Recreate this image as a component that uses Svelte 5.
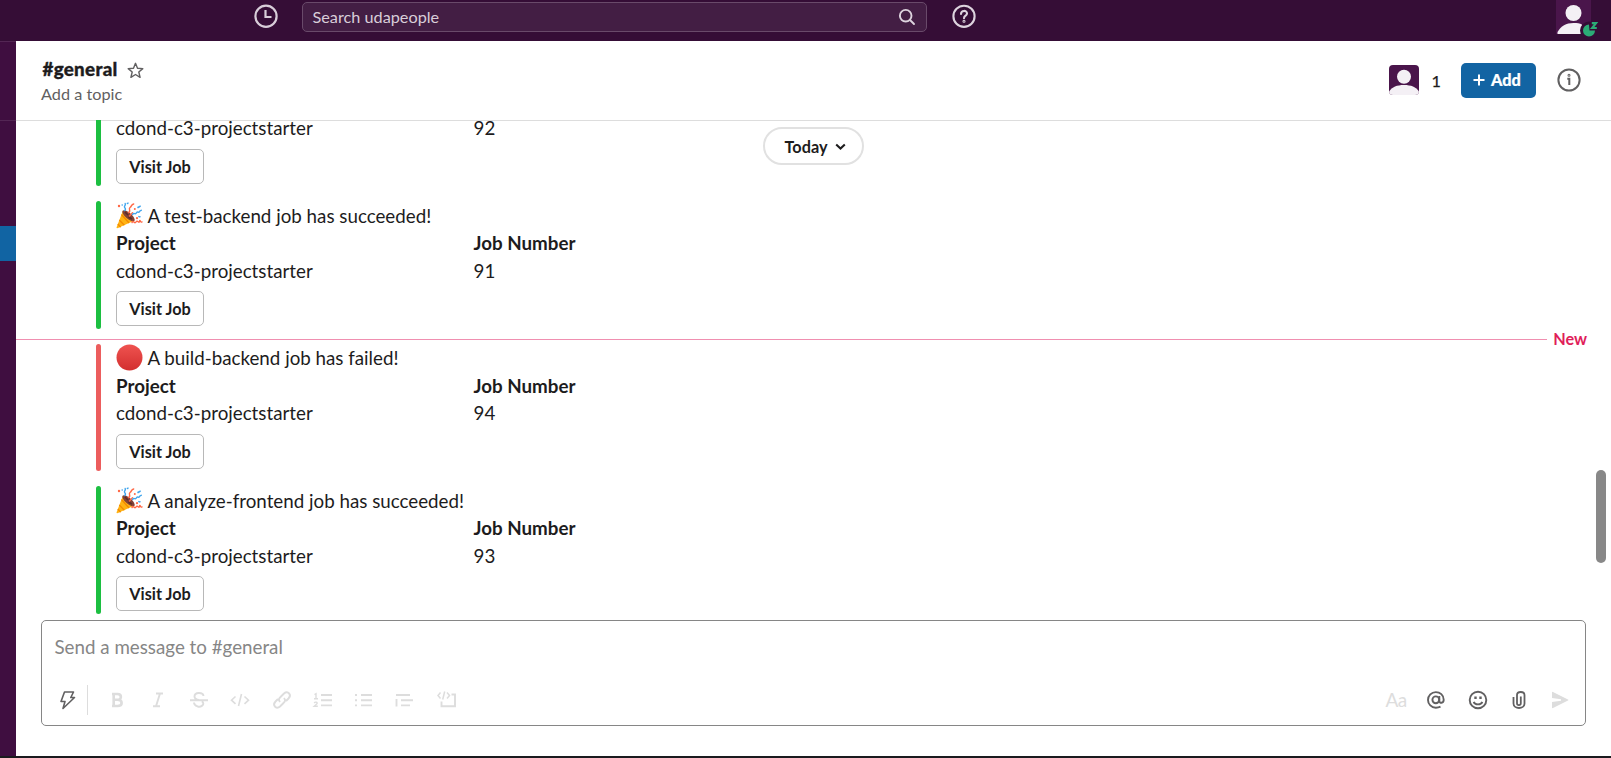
<script>
  const jobs = [
    { id: 1, title: 'A scan-frontend job has succeeded!', number: 92, ok: true, cut: true },
    { id: 2, title: 'A test-backend job has succeeded!', number: 91, ok: true },
    { id: 3, title: 'A build-backend job has failed!', number: 94, ok: false, fresh: true },
    { id: 4, title: 'A analyze-frontend job has succeeded!', number: 93, ok: true }
  ];
</script>

{#snippet person()}
  <svg class="person" viewBox="0 0 30 30">
    <rect width="30" height="30" fill="#4a154b" />
    <circle cx="15" cy="11.8" r="7" fill="#f4f0f5" />
    <path d="M0 30v-3.500C3 22 8 20 15 20s12 2 15 6.500V30z" fill="#f4f0f5" />
  </svg>
{/snippet}

{#snippet party()}
  <svg class="emoji" viewBox="0 0 27 27">
    <path d="M7 8.500 0.500 25.500Q0.500 26.500 2 26L18.500 18.500Z" fill="#ffb414" />
    <path d="M5.500 12.500 13 21M3.300 18l5 5.200M1.800 22l2.800 3.200" stroke="#f48b00" stroke-width="1.300" fill="none" />
    <ellipse cx="12.500" cy="13.800" rx="3" ry="7.800" transform="rotate(-49 12.500 13.800)" fill="#824237" />
    <path d="m9 10 3 3M12.500 15l3.500 2" stroke="#5b2d28" stroke-width="1.500" />
    <g fill="none" stroke-linecap="round" stroke-width="1.400">
      <path d="M12.500 10.500c3-1-.5-3.500 1.500-5 1.800-1 1-3 3.700-3.500M16 20.500c1-3 2.500 2 4-.5s3 2 3.500-.7 1 1.700 2.500.7M13.500 14l3-3.200" stroke="#ff6745" />
      <path d="M8.500 8.500c2-1 .5-2.500 0-3.300s1.500-2 .7-3.700M16.500 12.500c1.300-2.500 3 .5 3.800-1.400 1-2.500 2.200.2 3-1.300s1.400-1 2-1.600" stroke="#40a5ed" />
    </g>
    <g fill="#ff6745"><circle cx="3" cy="4" r="1.200" /><circle cx="18.800" cy="7" r="1" /><circle cx="21" cy="16.200" r="1.100" /></g>
    <g fill="#40a5ed"><circle cx="6.200" cy="3" r=".8" /><path d="m21 5 3.500-1.700.4 1.500-3 1.600zM10.500 1l2-.8v1.700l-1.500.4zM22.500 13.800l2.500.7-1 1.200-2-.6z" /></g>
  </svg>
{/snippet}

{#snippet redDot(id)}
  <svg class="emoji" viewBox="0 0 27 27">
    <defs><linearGradient id={'dot' + id} x1="0" y1="0" x2="0" y2="1"><stop offset="0" stop-color="#ef5350" /><stop offset="1" stop-color="#d32f2f" /></linearGradient></defs>
    <circle cx="13.500" cy="13.500" r="13" fill={'url(#dot' + id + ')'} />
  </svg>
{/snippet}

<div class="app">
  <header class="top">
    <svg class="clock" viewBox="0 0 26 26" fill="none" stroke="#d8cdd9" stroke-width="2.200">
      <circle cx="13" cy="13.300" r="10.600" /><path d="M12.500 7v7H18.500" />
    </svg>
    <div class="search">
      <span>Search udapeople</span>
      <svg width="18" height="18" viewBox="0 0 18 18" fill="none" stroke="#ddd3de" stroke-width="1.900" stroke-linecap="round"><circle cx="7.700" cy="7.700" r="5.800" /><path d="m12 12 4 4" /></svg>
    </div>
    <svg class="help" viewBox="0 0 26 26" fill="none" stroke="#ddd3de" stroke-width="2.100">
      <circle cx="13" cy="13.300" r="10.600" /><path d="M10 11c0-4 6-4 6-.6 0 2.400-3 2-3 4.800" stroke-linecap="round" /><circle cx="13" cy="18.200" r=".5" />
    </svg>
    <div class="me">
      <svg width="46" height="40" viewBox="0 0 46 40">
        <path d="M0 0h35v34H0z" fill="#4a154b" />
        <circle cx="17.500" cy="13" r="8" fill="#f4f0f5" />
        <path d="M1.500 34v-2C5 26 10 23 17.500 23c4 0 6 .3 8.500 1.500V34z" fill="#f4f0f5" />
        <circle cx="33" cy="30.500" r="9" fill="#350d36" />
        <path d="M34 22h10v12H34z" fill="#350d36" />
        <path d="M33 24.500a6 6 0 1 0 6 6h-5.500z" fill="#2bac76" />
        <path d="M35.800 23.200h4.200L36.200 28h4.600" fill="none" stroke="#2bac76" stroke-width="2.200" />
      </svg>
    </div>
  </header>

  <div class="body">
    <aside class="rail">
      <div class="team"></div>
      <div class="active"></div>
    </aside>
    <main>
      <div class="head">
        <div class="channel">
          <div class="name">
            <b>#general</b>
            <svg width="17" height="17" viewBox="0 0 17 17" fill="none" stroke="#616061" stroke-width="1.400" stroke-linejoin="round"><path d="m8.500 1.300 2 4.900 5.300.4-4 3.400 1.300 5.300-4.600-2.800-4.600 2.800L5.200 10l-4-3.400 5.300-.4z" /></svg>
          </div>
          <div class="topic">Add a topic</div>
        </div>
        <div class="actions">
          {@render person()}
          <span class="count">1</span>
          <button class="add"><svg width="12" height="12" viewBox="0 0 12 12" stroke="#fff" stroke-width="2"><path d="M6 .5v11M.5 6h11" /></svg>Add</button>
          <svg class="info" viewBox="0 0 26 26" fill="none" stroke="#616061" stroke-width="2"><circle cx="13" cy="13" r="10.600" /><path d="M11.300 11.700h2V18" /><circle cx="13" cy="8.300" r=".5" /></svg>
        </div>
      </div>

      <section class="messages">
        {#each jobs as job (job.id)}
          {#if job.fresh}
            <div class="unread"><i></i><span>New</span></div>
          {/if}
          <article class:joined={job.fresh} class:cut={job.cut}>
            <div class="stripe" class:failed={!job.ok}></div>
            <div class="content">
              {#if !job.cut}
                <div class="title">{#if job.ok}{@render party()}{:else}{@render redDot(job.id)}{/if}<span>{job.title}</span></div>
                <div class="fields"><b>Project</b><b>Job Number</b></div>
              {/if}
              <div class="fields"><span>cdond-c3-projectstarter</span><span>{job.number}</span></div>
              <button class="visit">Visit Job</button>
            </div>
          </article>
        {/each}
        <div class="today">Today<svg width="11" height="8" viewBox="0 0 11 8" fill="none" stroke="#1d1c1d" stroke-width="2.100"><path d="m1.200 1.500 4.300 4 4.300-4" /></svg></div>
        <div class="thumb"></div>
      </section>

      <div class="composer">
        <div class="placeholder">Send a message to #general</div>
        <div class="tools">
          <svg class="dark bolt" viewBox="-12 -12 24 24"><path d="M-3.500-8h9L2.800-2.500H6.500L-5 8.500-3 1.500H-7z" /></svg>
          <div class="rule"></div>
          <div class="group">
            <svg viewBox="-12 -12 24 24"><path stroke-width="2.600" d="M-5-6H.5C5-6 5-.2.500-.2H-3.500M.5-.2C6-.2 6 6 .5 6H-5M-3.300-6V6" /></svg>
            <svg viewBox="-12 -12 24 24"><path d="M-2-6.500H5M-5 6.300H2M2-6.500-2 6.300" stroke-width="1.900" /></svg>
            <svg viewBox="-12 -12 24 24"><path d="M4.500-4C4-8-4.500-8-4.500-3.500-4.500-1.500-3-.5 0 0M3 1.200C7 5 1 7.500-1.500 6.300-4 5.500-5 4-5 2.500M-9 .2H9" /></svg>
            <svg viewBox="-12 -12 24 24"><path d="m-4.500-3.500-4 3.700 4 3.700M4.500-3.500l4 3.700-4 3.700M1.500-6-1.500 6" stroke-width="1.600" /></svg>
            <svg viewBox="-12 -12 24 24"><path d="M-2 2C-4-.5-3-1.500-1-3.500L2-6.500C6-10 10-5 6.500-1.500L4 1M2-2C4 .5 3 1.500 1 3.500L-2 6.500C-6 10-10 5-6.500 1.500L-4-1" stroke-width="1.900" /></svg>
            <svg viewBox="-12 -12 24 24"><path d="M-2-5H9M-2 .2H9M-2 5.400H9" /><path d="m-8.500-5.300 1.500-1v5M-9-1.300h4M-8.800 3c1-1.500 3.500-1 2.800.7L-8.800 6.200h3.600" stroke-width="1.400" /></svg>
            <svg viewBox="-12 -12 24 24"><path d="M-3-5H8M-3 .2H8M-3 5.400H8M-9-5h2M-9 .2h2M-9 5.400h2" /></svg>
            <svg viewBox="-12 -12 24 24"><path d="M-9-5H5M-4 .2H8M-4 5.400H5M-8.500-1V6.500" /></svg>
            <svg viewBox="-12 -12 24 24"><path d="M-6.500-7.500-9-4.500-6.500-1.500M0-7.500 2.500-4.500 0-1.500M-2.300-8.500l-2 8" stroke-width="1.500" /><path d="M4.500-5.500H8V6.300H-5.500V1.500" /></svg>
          </div>
          <div class="group right">
            <span class="aa">Aa</span>
            <svg class="dark" viewBox="-12 -12 24 24"><circle cx="-.2" cy="-.2" r="3.400" /><path d="M3.300-4v4.800c0 3 4.400 2.500 4.400-1C7.700-5 4-7.900-.2-7.900A7.700 7.700 0 0 0-.2 7.700c2 0 3.300-.3 4.700-1" /></svg>
            <svg class="dark" viewBox="-12 -12 24 24"><circle r="8.300" /><path d="M-4.300 1.800C-3 5.200 3 5.200 4.300 1.800" stroke-width="1.900" /><path d="M-3.700-2.300h2.400M1.300-2.300h2.400" stroke-width="2.400" /></svg>
            <svg class="dark" viewBox="-12 -12 24 24"><path d="M-5.500-3V3.500C-5.500 9.500 5.500 9.500 5.500 3.500V-5C5.500-9-2-9-2-5V3.200C-2 5.700 1.800 5.700 1.800 3.200V-3.500" stroke-width="1.800" /></svg>
            <svg class="send" viewBox="-12 -12 24 24"><path d="M-8-7.500Q-8-8.500-7-8L8-.6Q9 0 8 .6L-7 8Q-8 8.500-8 7.500V2L1 .7V-.7L-8-2Z" /></svg>
          </div>
        </div>
      </div>
    </main>
  </div>
</div>

<style>
  :global(body) { margin: 0; overflow: hidden; }
  * { box-sizing: border-box; }
  .app { width: 1611px; height: 758px; display: flex; flex-direction: column; font: 18.75px/27.500px Lato, sans-serif; color: #1d1c1d; background: #fff; border-bottom: 2px solid #1a1a1e; overflow: hidden; }
  button { font-family: inherit; color: inherit; }
  svg { flex: none; display: block; }
  .top { height: 41px; flex: none; background: #350d36; display: flex; align-items: flex-start; padding-left: 253px; }
  .clock, .help { width: 26px; height: 26px; margin-top: 3px; }
  .search { width: 625px; height: 30px; margin: 2px 23.500px 0 23px; border: 1px solid #694a6a; border-radius: 5px; background: #431e44; color: #d9ced9; display: flex; align-items: center; justify-content: space-between; padding: 0 10px 0 9.500px; font-size: 16.250px; }
  .me { margin-left: auto; margin-right: 9px; }
  .body { flex: 1; display: flex; min-height: 0; }
  .rail { width: 16px; background: #3f0e40; border-top: 1px solid #532654; }
  .team { height: 79px; border-bottom: 1px solid #532654; }
  .active { height: 35px; margin-top: 105px; background: #1164a3; }
  main { flex: 1; display: flex; flex-direction: column; min-width: 0; }
  .head { height: 80px; flex: none; border-bottom: 1px solid #ddd; display: flex; justify-content: space-between; padding: 0 30px 0 25px; }
  .name { display: flex; align-items: center; gap: 10px; margin-top: 14px; padding-left: 1.500px; height: 28px; }
  .name b { font-weight: 900; font-size: 18.750px; letter-spacing: .3px; -webkit-text-stroke: .35px; }
  .name svg { margin-top: 3px; margin-left: -.5px; }
  .topic { font-size: 16.250px; line-height: 22px; color: #616061; }
  .actions { display: flex; align-items: center; padding-bottom: 1px; }
  .person { width: 30px; height: 30px; border-radius: 4px; }
  .count { font-size: 16.250px; font-weight: 400; margin-left: 12.500px; width: 29.500px; padding-top: 1px; -webkit-text-stroke: .25px; }
  .add { height: 35px; width: 75px; border: 0; border-radius: 5px; background: #1264a3; color: #fff; font-weight: 900; font-size: 16.250px; display: flex; align-items: center; justify-content: center; gap: 6px; padding: 0 3px 1px 0; -webkit-text-stroke: .2px; }
  .info { width: 26px; height: 26px; margin-left: 20px; margin-right: -1px; }
  .messages { position: relative; height: 500px; margin-top: -1px; flex: none; overflow: hidden; display: flex; flex-direction: column; justify-content: flex-end; padding: 0 0 6.500px; }
  article { display: flex; gap: 15px; margin-left: 80px; margin-top: 15px; flex: none; height: 127.500px; }
  article.cut { height: 66px; margin-top: 0; }
  .stripe { width: 5px; border-radius: 5px; background: #1cbf41; }
  .stripe.failed { background: #ec5d5d; }
  .content { padding-top: .5px; }
  .title { display: flex; align-items: center; height: 27.500px; gap: 4.500px; }
  .emoji { width: 27px; height: 27px; }
  .fields { display: grid; grid-template-columns: 357.500px auto; height: 27.500px; }
  .fields b { font-weight: 700; }
  .visit { display: block; margin-top: 7px; height: 35px; width: 88px; padding: 0; background: #fff; border: 1px solid #b8b8b8; border-radius: 5px; font-size: 16.250px; font-weight: 700; }
  .cut .stripe { border-radius: 0 0 5px 5px; }
  .cut .content { padding-top: 0; }
  .cut .fields { height: 15px; line-height: 15px; }
  .cut .visit { margin-top: 14px; }
  article.joined { margin-top: 0; }
  .unread { height: 15px; flex: none; padding: 6px 24px 0 0; display: flex; align-items: center; gap: 6px; color: #e01e5a; font-size: 16.250px; font-weight: 700; line-height: 20px; }
  .unread i { flex: 1; height: 1px; background: #f08fb0; }
  .unread span { padding-bottom: 1px; }
  .today { position: absolute; left: 747px; top: 7px; width: 101px; height: 38px; padding: 2px 0 0 4px; border: 2px solid #e1e1e1; border-radius: 19px; background: #fff; display: flex; align-items: center; justify-content: center; gap: 8px; font-size: 16.250px; font-weight: 700; }
  .thumb { position: absolute; left: 1580px; top: 350px; width: 10px; height: 93px; border-radius: 5px; background: #888; }
  .composer { height: 106px; margin: 0 25px 0 25px; border: 1px solid #868686; border-radius: 5px; }
  .placeholder { padding: 12px 12.500px 0; height: 61px; color: #868686; }
  .tools { display: flex; align-items: center; height: 36px; padding-left: 14px; }
  .tools svg { width: 24px; height: 24px; fill: none; stroke: #dddddd; stroke-width: 1.900; }
  .tools svg.dark { stroke: #616061; stroke-width: 1.900; }
  .tools svg.bolt { stroke-linejoin: round; stroke-width: 1.600; }
  .tools svg.send { fill: #ddd; stroke: none; }
  .rule { width: 1px; height: 30px; margin-left: 7px; margin-right: 16.500px; background: #ddd; }
  .group { display: flex; gap: 17.250px; align-items: center; }
  .right { margin-left: auto; margin-right: 13px; }
  .aa { width: 24px; color: #ddd; display: flex; justify-content: center; font-size: 19px; padding-left: 2px; letter-spacing: -.6px; }
</style>
